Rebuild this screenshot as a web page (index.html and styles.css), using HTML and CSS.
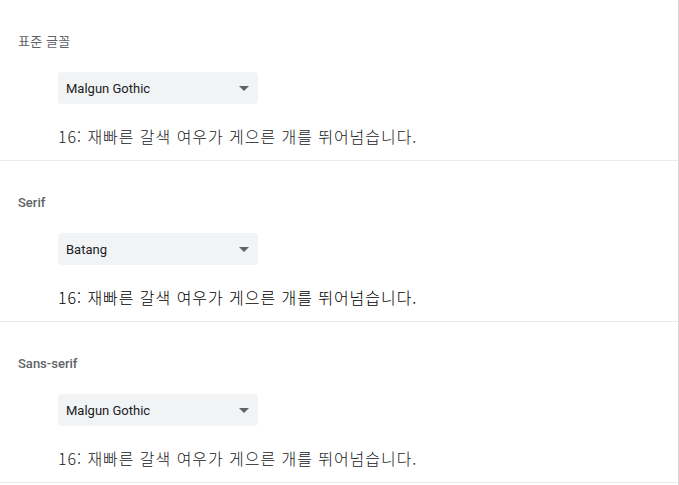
FILE: index.html
```html
<!DOCTYPE html>
<html lang="ko">
<head>
<meta charset="utf-8">
<link rel="stylesheet" href="styles.css">
</head>
<body>
<div class="page">
  <section class="block">
    <div class="label ko">표준 글꼴</div>
    <div class="select"><span>Malgun Gothic</span><svg class="arrow" width="10" height="5" viewBox="0 0 10 5"><path d="M0 0h10L5 5z"/></svg></div>
    <div class="sample">16: 재빠른 갈색 여우가 게으른 개를 뛰어넘습니다.</div>
  </section>
  <section class="block">
    <div class="label">Serif</div>
    <div class="select"><span>Batang</span><svg class="arrow" width="10" height="5" viewBox="0 0 10 5"><path d="M0 0h10L5 5z"/></svg></div>
    <div class="sample serif">16: 재빠른 갈색 여우가 게으른 개를 뛰어넘습니다.</div>
  </section>
  <section class="block">
    <div class="label">Sans-serif</div>
    <div class="select"><span>Malgun Gothic</span><svg class="arrow" width="10" height="5" viewBox="0 0 10 5"><path d="M0 0h10L5 5z"/></svg></div>
    <div class="sample">16: 재빠른 갈색 여우가 게으른 개를 뛰어넘습니다.</div>
  </section>
</div>
</body>
</html>
```
FILE: styles.css
```css
html, body {
  margin: 0;
  padding: 0;
  background: #ffffff;
}
body {
  font-family: Roboto, "Noto Sans CJK KR", sans-serif;
}
.page {
  width: 678px;
  border-right: 1px solid #d6d6d6;
  min-height: 485px;
}
.block {
  padding: 32px 0 12px 0;
  border-bottom: 1px solid #ebebeb;
  display: flex;
  flex-direction: column;
  align-items: flex-start;
}
.label {
  margin-left: 18px;
  height: 20px;
  line-height: 20px;
  font-size: 13px;
  font-weight: 500;
  color: #5f6368;
  font-family: Roboto, "Noto Sans CJK KR", sans-serif;
}
.label.ko {
  font-weight: 400;
  letter-spacing: 0.3px;
}
.select {
  margin-top: 20px;
  margin-left: 58px;
  width: 200px;
  height: 32px;
  box-sizing: border-box;
  padding: 0 9px 0 8px;
  background: #f1f3f4;
  border-radius: 4px;
  display: flex;
  align-items: center;
  justify-content: space-between;
  font-size: 13px;
  color: #202124;
}
.arrow {
  fill: #5f6368;
}
.sample {
  margin-top: 20px;
  margin-left: 58px;
  height: 24px;
  line-height: 24px;
  font-size: 16px;
  letter-spacing: 0.95px;
  color: #202124;
  font-family: "Noto Sans CJK KR", sans-serif;
  font-weight: 300;
}
.sample.serif {
  font-weight: 300;
  color: #000000;
}
```
